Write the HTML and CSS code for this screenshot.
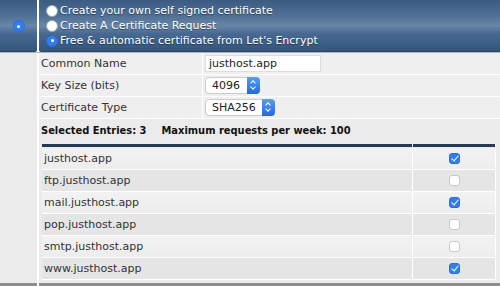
FILE: index.html
```html
<!DOCTYPE html>
<html>
<head>
<meta charset="utf-8">
<link rel="stylesheet" href="styles.css">
</head>
<body>
<div class="panel">
  <div class="head">
    <div class="head-side"><span class="radio on"></span></div>
    <div class="head-main">
      <label class="opt"><span class="radio"></span>Create your own self signed certificate</label>
      <label class="opt"><span class="radio"></span>Create A Certificate Request</label>
      <label class="opt"><span class="radio on"></span>Free &amp; automatic certificate from Let's Encrypt</label>
    </div>
  </div>
  <div class="body">
    <div class="body-side"></div>
    <div class="body-main">
      <div class="row">
        <div class="lab">Common Name</div>
        <div class="val"><span class="input">justhost.app</span></div>
      </div>
      <div class="row">
        <div class="lab">Key Size (bits)</div>
        <div class="val"><span class="select w1">4096<span class="step"></span></span></div>
      </div>
      <div class="row">
        <div class="lab">Certificate Type</div>
        <div class="val"><span class="select w2">SHA256<span class="step"></span></span></div>
      </div>
      <div class="summary"><b>Selected Entries: 3</b><b>Maximum requests per week: 100</b></div>
      <div class="list">
        <div class="lhead"><span class="c1"></span><span class="c2"></span></div>
        <div class="lrow a"><span class="c1">justhost.app</span><span class="c2"><span class="cb on"></span></span></div>
        <div class="lrow b"><span class="c1">ftp.justhost.app</span><span class="c2"><span class="cb"></span></span></div>
        <div class="lrow a"><span class="c1">mail.justhost.app</span><span class="c2"><span class="cb on"></span></span></div>
        <div class="lrow b"><span class="c1">pop.justhost.app</span><span class="c2"><span class="cb"></span></span></div>
        <div class="lrow a"><span class="c1">smtp.justhost.app</span><span class="c2"><span class="cb"></span></span></div>
        <div class="lrow b"><span class="c1">www.justhost.app</span><span class="c2"><span class="cb on"></span></span></div>
      </div>
    </div>
  </div>
</div>
</body>
</html>
```
FILE: styles.css
```css
html, body { margin: 0; padding: 0; background: #ffffff; }
body { font-family: "DejaVu Sans", Verdana, sans-serif; font-size: 11px; color: #222; }
.panel { width: 500px; height: 286px; overflow: hidden; display: flex; flex-direction: column; background: #fff; }
.head { display: flex; gap: 2px; height: 52px; border-bottom: 1px solid #aeb5bd; }
.head-side, .head-main {
  background: linear-gradient(#3b5b81 0%, #4f7096 30%, #6886a7 50%, #476890 65%, #33557c 100%);
  box-shadow: inset 0 -1px 0 #2a4466;
}
.head-side { width: 37px; display: flex; align-items: center; justify-content: center; border-radius: 0 0 3px 0; }
.head-main { flex: 1; padding: 3px 0 0 7px; border-radius: 0 0 0 3px; }
.opt { display: flex; align-items: center; height: 15px; color: #fff; text-shadow: 0 1px 1px rgba(0,0,0,0.45); }
.radio { width: 12px; height: 12px; border-radius: 50%; background: #fff; box-sizing: border-box; border: 1px solid #9aa; margin-right: 2px; flex: none; position: relative; }
.radio.on { background: #2f7ef5; border-color: #2a6fd6; }
.radio.on::after { content: ""; position: absolute; left: 3.5px; top: 3.5px; width: 3px; height: 3px; border-radius: 50%; background: #fff; }
.head-side .radio { margin: 0; }
.body { display: flex; gap: 2px; flex: 1; }
.body-side { width: 37px; background: #ebebeb; border-bottom: 3px solid #8e8e8e; }
.body-main { flex: 1; background: #ebebeb; border-bottom: 3px solid #8e8e8e; display: flex; flex-direction: column; }
.row { display: flex; height: 21px; border-bottom: 1px solid #fff; background: #efefef; }
.lab { width: 161px; padding-left: 2px; border-right: 1px solid #fff; display: flex; align-items: center; color: #333; }
.val { flex: 1; display: flex; align-items: center; padding-left: 2px; }
.input { width: 116px; height: 17px; box-sizing: border-box; border: 1px solid #ddd; background: #fff; padding-left: 3px; display: flex; align-items: center; color: #222; }
.select { height: 17px; box-sizing: border-box; border: 1px solid #ccc; border-radius: 4px; background: #fff; padding-left: 6px; display: flex; align-items: center; position: relative; }
.select.w1 { width: 55px; }
.select.w2 { width: 70px; }
.step { position: absolute; right: -1px; top: -1px; width: 13px; height: 17px; border-radius: 0 4px 4px 0; background: linear-gradient(#5a9cf7, #1f68e0); }
.step::before, .step::after { content: ""; position: absolute; left: 4px; width: 3px; height: 3px; border-left: 1px solid #fff; border-top: 1px solid #fff; }
.step::before { top: 4px; transform: rotate(45deg); }
.step::after { top: 8px; transform: rotate(-135deg); }
.summary { height: 23px; display: flex; align-items: center; gap: 15px; padding-left: 2px; font-family: "DejaVu Sans Condensed", "DejaVu Sans", sans-serif; font-weight: bold; color: #111; }
.list { margin: 2px 4px 0 3px; display: flex; flex-direction: column; border-right: 1px solid #fff; }
.lhead { display: flex; height: 3px; margin-bottom: 1px; }
.lhead .c1, .lhead .c2 { background: #243a58; display: block; height: 3px; }
.lhead .c1 { width: 370px; margin-right: 1px; flex: none; }
.lhead .c2 { flex: 1; }
.lrow { display: flex; height: 21px; border-bottom: 1px solid #fff; }
.lrow.a { background: linear-gradient(#f2f2f2, #ededed); }
.lrow.b { background: #e5e5e5; }
.lrow .c1 { flex: none; border-right: 1px solid #fff; display: flex; align-items: center; padding-left: 2px; box-sizing: border-box; width: 371px; color: #333; }
.lrow .c2 { flex: 1; display: flex; align-items: center; justify-content: center; }
.cb { width: 11px; height: 11px; box-sizing: border-box; border: 1px solid #c9c9c9; border-radius: 3px; background: #fff; position: relative; }
.cb.on { background: #2f7ef5; border-color: #2a6fd6; }
.cb.on::after { content: ""; position: absolute; left: 3px; top: 0px; width: 3px; height: 6px; border-right: 1.5px solid #fff; border-bottom: 1.5px solid #fff; transform: rotate(40deg); }
```
